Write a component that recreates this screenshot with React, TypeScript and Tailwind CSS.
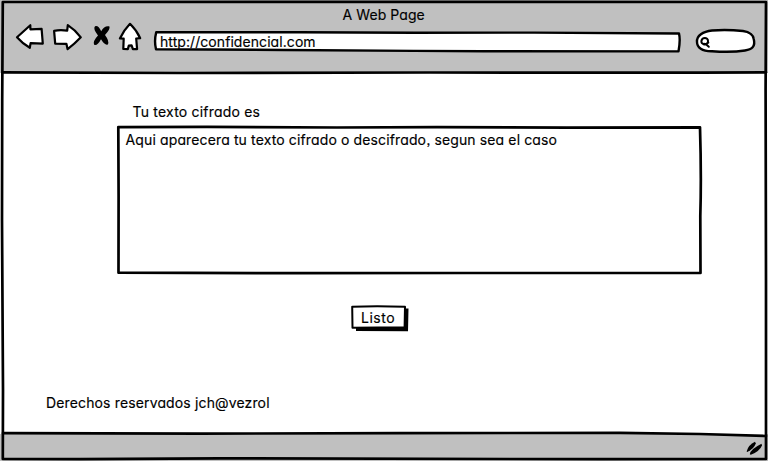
import type { ReactNode } from "react";

const textBase =
  "block whitespace-pre text-black font-normal leading-[18px] [-webkit-text-stroke:0.15px_#000] [font-family:Inter,'Liberation_Sans',sans-serif] [font-feature-settings:'cv11','ss03']";

function Ink({ w, h, children }: { w: number; h: number; children: ReactNode }) {
  return (
    <svg
      className="pointer-events-none absolute left-0 top-0 overflow-visible"
      width={w}
      height={h}
      viewBox={`0 0 ${w} ${h}`}
      fill="none"
      stroke="#000"
      strokeWidth="2.7"
      strokeLinecap="round"
      strokeLinejoin="round"
    >
      {children}
    </svg>
  );
}

function NavIcons() {
  return (
    <svg className="mt-5 ml-[14px] h-8 w-[130px] shrink-0" viewBox="14 20 130 32" stroke="#000" strokeWidth="2.2" strokeLinejoin="round" strokeLinecap="round">
      <path fill="#fff" d="M17 37.2 30.3 25.2 30.4 29.3 41.6 28.8 42.8 43.6 30.6 43.1 29.8 47.8Q22.5 43.5 17 37.2Z" />
      <path fill="#fff" d="M54.1 30.8Q60 29.7 67.2 30.6L67.8 25.2Q75.5 30.2 80.8 37.3Q74.5 44 67.6 49.2L66.4 43.8 55.2 43.7Z" />
      <path fill="#000" stroke="none" d="M95 26.3Q98.3 25 101.2 31.2Q104.3 25.3 109.3 26.3Q110.8 28.8 105 35Q109.7 41.3 107.8 44.4Q105 45.8 101 39.2Q97.5 46 94.2 44.8Q92.4 41.4 98 35.5Q92.7 28.8 95 26.3Z" />
      <path fill="#fff" d="M130 23.8Q136.6 30.2 140.2 38.2L136.2 38.5 137.1 49.1 132.9 49.2 131.6 45.4 128.8 45.6 127.8 49.2 123.3 49 123.7 38.7 119.9 38.5Q123.8 30.2 130 23.8Z" />
    </svg>
  );
}

function AddressBar() {
  return (
    <div className="relative mt-[31px] ml-[10px] h-[21px] w-[527px] shrink-0">
      <Ink w={527} h={21}>
        <path strokeWidth="2.4" fill="#fff" d="M2.2 1.2 145 1.3 260 1.8 380 1.6 525 2.5Q526.6 9 524.5 20.4L330 20.3 260 19.9 130 19 2 18.2Q0 10 2.2 1.2Z" />
      </Ink>
      <span className={`${textBase} relative ml-[6px] pt-[2px] text-[14px] tracking-[0.07px]`}>http://confidencial.com</span>
    </div>
  );
}

function SearchBox() {
  return (
    <svg className="mt-7 ml-[14px] h-[26px] w-[62px] shrink-0" viewBox="695 28 62 26" fill="none" stroke="#000" strokeWidth="2.4" strokeLinecap="round">
      <path fill="#fff" d="M697 42C696.4 35.5 703 31.5 712 30.5Q727 29.4 743 31C750.5 32 753.2 36 753.6 38.5C756 47 751.5 49.5 745 50.5Q732 52.5 712 51.2C702 51.4 697 47.5 697 42Z" />
      <path strokeWidth="2" d="M708.3 42.6C705.3 46 701 44 701.4 41C702 37.1 708 37 708 41C708.3 43.4 705.8 44.5 704 43.7M705.7 44 708.8 46.8" />
    </svg>
  );
}

export default function App() {
  return (
    <div className="relative flex h-[461px] w-[768px] flex-col overflow-hidden bg-white">
      <header className="relative h-[73px] shrink-0 bg-[#c0c0c0]">
        <div className="flex">
          <NavIcons />
          <AddressBar />
          <SearchBox />
        </div>
        <h1 className={`${textBase} absolute left-[342.5px] top-[6px] text-[14px] tracking-[0.08px]`}>A Web Page</h1>
      </header>

      <main className="flex h-[361px] shrink-0 flex-col">
        <span className={`${textBase} ml-[132.5px] mt-[30px] text-[14px] tracking-[0.2px]`}>Tu texto cifrado es</span>
        <section className="relative ml-[117px] mt-[5px] h-[148px] w-[585px] shrink-0">
          <Ink w={585} h={148}>
            <path d="M1.3 1.1 90 .9 220 1.5 320 1.2 450 1.6 583 1.4Q584.5 50 583.3 90L583.5 147 350 147 180 147.2 70 146.8 1.5 146.7 1.6 70Z" />
          </Ink>
          <p className={`${textBase} relative ml-[8.5px] pt-[5px] text-[14px] tracking-[0.13px]`}>
            Aqui aparecera tu texto cifrado o descifrado, segun sea el caso
          </p>
        </section>
        <button className="relative ml-[351px] mt-[31px] h-[26px] w-[58px] shrink-0 text-left">
          <Ink w={58} h={26}>
            <path fill="#000" stroke="none" d="M54 3.5 57.5 3.5 57 26.3 5 26 5 22 54 22Z" />
            <path fill="#fff" strokeWidth="2" d="M1.2 1.8Q25 .8 54 1.8L53.6 22.3 1.5 22.8Z" />
          </Ink>
          <span className={`${textBase} relative ml-[10px] text-[14px] tracking-[0.5px]`}>Listo</span>
        </button>
        <span className={`${textBase} ml-[46px] mt-[63px] text-[14px] tracking-[0.14px]`}>Derechos reservados jch@vezrol</span>
      </main>

      <footer className="flex h-[27px] shrink-0 justify-end bg-[#c0c0c0]">
        <svg className="mr-[5px] mt-[6px] h-[16px] w-[18px]" viewBox="745 440 18 16" fill="#000">
          <path d="M746.6 451.5Q748.5 444.7 755 441.8L755.8 443.5Q753.8 449 747.3 452Z" />
          <path d="M749.8 454.2Q750.5 449.2 761.5 443.8L762 445.5Q759.5 451.5 750.8 454.8Z" />
        </svg>
      </footer>

      <Ink w={768} h={461}>
        <path fill="#fff" stroke="none" d="M600 430H766V435.6L700 434.2 600 432.8Z" />
        <path d="M2.8 2 384 1.8 766 2 765.6 90 766 280 766 459 600 459.2 220 458.3 80 459.2 2.8 459 3 390 2 220 2.2 100Z" />
        <path d="M3 72.3 180 73 430 72.5 700 72.7 766 72.3M3 433.2 200 433.6 400 433.2 620 432.8 700 434 766 436" />
      </Ink>
    </div>
  );
}
